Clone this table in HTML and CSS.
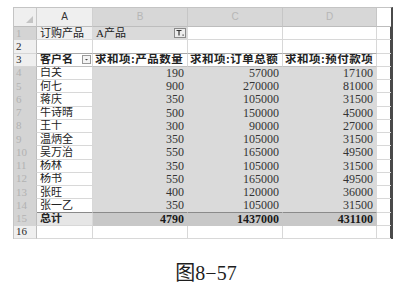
FILE: index.html
```html
<!DOCTYPE html>
<html lang="zh">
<head>
<meta charset="utf-8">
<link rel="stylesheet" href="styles.css">
</head>
<body>
<div class="page">
  <div class="sheet">
    <!-- header row -->
    <div class="corner"><svg width="7" height="7" viewBox="0 0 7 7"><polygon points="7,0 7,7 0,7" fill="#c4c4c4"/></svg></div>
    <div class="ch">A</div>
    <div class="ch sel">B</div>
    <div class="ch sel">C</div>
    <div class="ch sel">D</div>
    <div class="ch e"></div>

    <!-- row 1 -->
    <div class="rh sel">1</div>
    <div class="c a1">订购产品</div>
    <div class="c sel b1"><span>A产品</span><span class="fbtn"><svg width="12" height="10" viewBox="0 0 12 10"><rect x="0.5" y="0.5" width="11" height="9" fill="#ececec" stroke="#8a8a8a"/><path d="M2.5 2.5h5M5 2.5v5" stroke="#333" stroke-width="1.2" fill="none"/><rect x="8.5" y="6.5" width="1.2" height="1.2" fill="#333"/></svg></span></div>
    <div class="c"></div>
    <div class="c"></div>
    <div class="c e"></div>

    <!-- row 2 -->
    <div class="rh">2</div>
    <div class="c hl"></div>
    <div class="c hl"></div>
    <div class="c hl"></div>
    <div class="c hl"></div>
    <div class="c e"></div>

    <!-- row 3 -->
    <div class="rh">3</div>
    <div class="c hd a3"><span>客户名</span><span class="dbtn"><svg width="9" height="9" viewBox="0 0 9 9"><rect x="0.5" y="0.5" width="8" height="8" fill="#f4f4f4" stroke="#9a9a9a"/><polygon points="3,4 6,4 4.5,5.5" fill="#444"/></svg></span></div>
    <div class="c hd hv">求和项:产品数量</div>
    <div class="c hd hv">求和项:订单总额</div>
    <div class="c hd hv">求和项:预付款项</div>
    <div class="c e"></div>

    <div class="rh sel">4</div><div class="c">白关</div><div class="c sel n">190</div><div class="c sel n">57000</div><div class="c sel n">17100</div><div class="c e"></div>
    <div class="rh sel">5</div><div class="c">何七</div><div class="c sel n">900</div><div class="c sel n">270000</div><div class="c sel n">81000</div><div class="c e"></div>
    <div class="rh sel">6</div><div class="c">蒋庆</div><div class="c sel n">350</div><div class="c sel n">105000</div><div class="c sel n">31500</div><div class="c e"></div>
    <div class="rh sel">7</div><div class="c">牛诗晴</div><div class="c sel n">500</div><div class="c sel n">150000</div><div class="c sel n">45000</div><div class="c e"></div>
    <div class="rh sel">8</div><div class="c">王十</div><div class="c sel n">300</div><div class="c sel n">90000</div><div class="c sel n">27000</div><div class="c e"></div>
    <div class="rh sel">9</div><div class="c">温炳全</div><div class="c sel n">350</div><div class="c sel n">105000</div><div class="c sel n">31500</div><div class="c e"></div>
    <div class="rh sel">10</div><div class="c">吴万治</div><div class="c sel n">550</div><div class="c sel n">165000</div><div class="c sel n">49500</div><div class="c e"></div>
    <div class="rh sel">11</div><div class="c">杨林</div><div class="c sel n">350</div><div class="c sel n">105000</div><div class="c sel n">31500</div><div class="c e"></div>
    <div class="rh sel">12</div><div class="c">杨书</div><div class="c sel n">550</div><div class="c sel n">165000</div><div class="c sel n">49500</div><div class="c e"></div>
    <div class="rh sel">13</div><div class="c">张旺</div><div class="c sel n">400</div><div class="c sel n">120000</div><div class="c sel n">36000</div><div class="c e"></div>
    <div class="rh sel">14</div><div class="c last">张一乙</div><div class="c sel n last">350</div><div class="c sel n last">105000</div><div class="c sel n last">31500</div><div class="c e"></div>

    <div class="rh sel">15</div><div class="c totl">总计</div><div class="c tot n">4790</div><div class="c tot n">1437000</div><div class="c tot n">431100</div><div class="c e"></div>

    <div class="rh">16</div><div class="c"></div><div class="c"></div><div class="c"></div><div class="c"></div><div class="c e"></div>
  </div>
  <div class="caption">图8−57</div>
</div>
</body>
</html>
```
FILE: styles.css
```css
* { box-sizing: border-box; }
html, body { margin: 0; padding: 0; background: #ffffff; }
body {
  width: 402px;
  height: 300px;
  overflow: hidden;
  font-family: "Liberation Serif", "Noto Sans CJK SC", serif;
  color: #222222;
}
.page { padding-top: 7px; }
.sheet {
  margin-left: 13px;
  width: 380px;
  display: grid;
  grid-template-columns: 23px 56px 95px 95px 94px 14px;
  grid-template-rows: 19px repeat(16, 13.25px);
  border-top: 1px solid #c4c4c4;
  border-left: 1px solid #c4c4c4;
  border-right: 3px solid #4a4a4a;
}
.sheet > div {
  display: flex;
  align-items: center;
  overflow: hidden;
  white-space: nowrap;
  line-height: 1;
}
.corner {
  background: #efefef;
  border-right: 1px solid #c8c8c8;
  border-bottom: 1px solid #bdbdbd;
  justify-content: flex-end;
  align-items: flex-end !important;
  padding: 0 3px 3px 0;
}
.corner svg { display: block; }
.ch {
  background: #efefef;
  border-right: 1px solid #d0d0d0;
  border-bottom: 1px solid #bdbdbd;
  justify-content: center;
  font-family: "Liberation Sans", "Noto Sans CJK SC", sans-serif;
  font-size: 10px;
  color: #333;
}
.ch.sel { background: #d7d7d7; color: #b6b6b6; border-right-color: #c6c6c6; }
.ch.e { background: #ffffff; border-right: none; }
.rh {
  background: #efefef;
  border-right: 1px solid #bdbdbd;
  border-bottom: 1px solid #d6d6d6;
  padding-left: 2px;
  font-size: 11px;
  color: #2a2a2a;
}
.rh.sel { background: #d4d4d4; color: #b2b2b2; border-bottom-color: #d4d4d4; }
.c {
  border-right: 1px solid #d8d8d8;
  border-bottom: 1px solid #d8d8d8;
  padding: 0 3px;
  font-size: 11px;
}
.c.e { border-right: none; }
.c.sel { background: #dadada; border-color: #dadada; }
.c.n { justify-content: flex-end; font-size: 12px; color: #333; }
.a1 { background: #f0f0f0; }
.b1 { justify-content: space-between; padding-right: 1px; }
.fbtn svg, .dbtn svg { display: block; }
.hl { border-bottom-color: #a8a8a8; }
.hd { font-weight: bold; border-bottom-color: #c0c0c0; }
.hv { letter-spacing: 0.5px; font-size: 11.5px; padding-left: 2px; }
.a3 { justify-content: space-between; padding-right: 1px; }
.c.last { border-bottom-color: #8a8a8a; }
.totl { background: #e6e6e6; font-weight: bold; }
.tot { background: #c8c8c8; font-weight: bold; border-color: #c8c8c8; }
.c.tot.n { font-size: 12px; color: #1a1a1a; }
.caption {
  margin-top: 22px;
  padding-left: 10px;
  text-align: center;
  font-size: 20px;
  line-height: 24px;
  color: #1e1e1e;
}
```
